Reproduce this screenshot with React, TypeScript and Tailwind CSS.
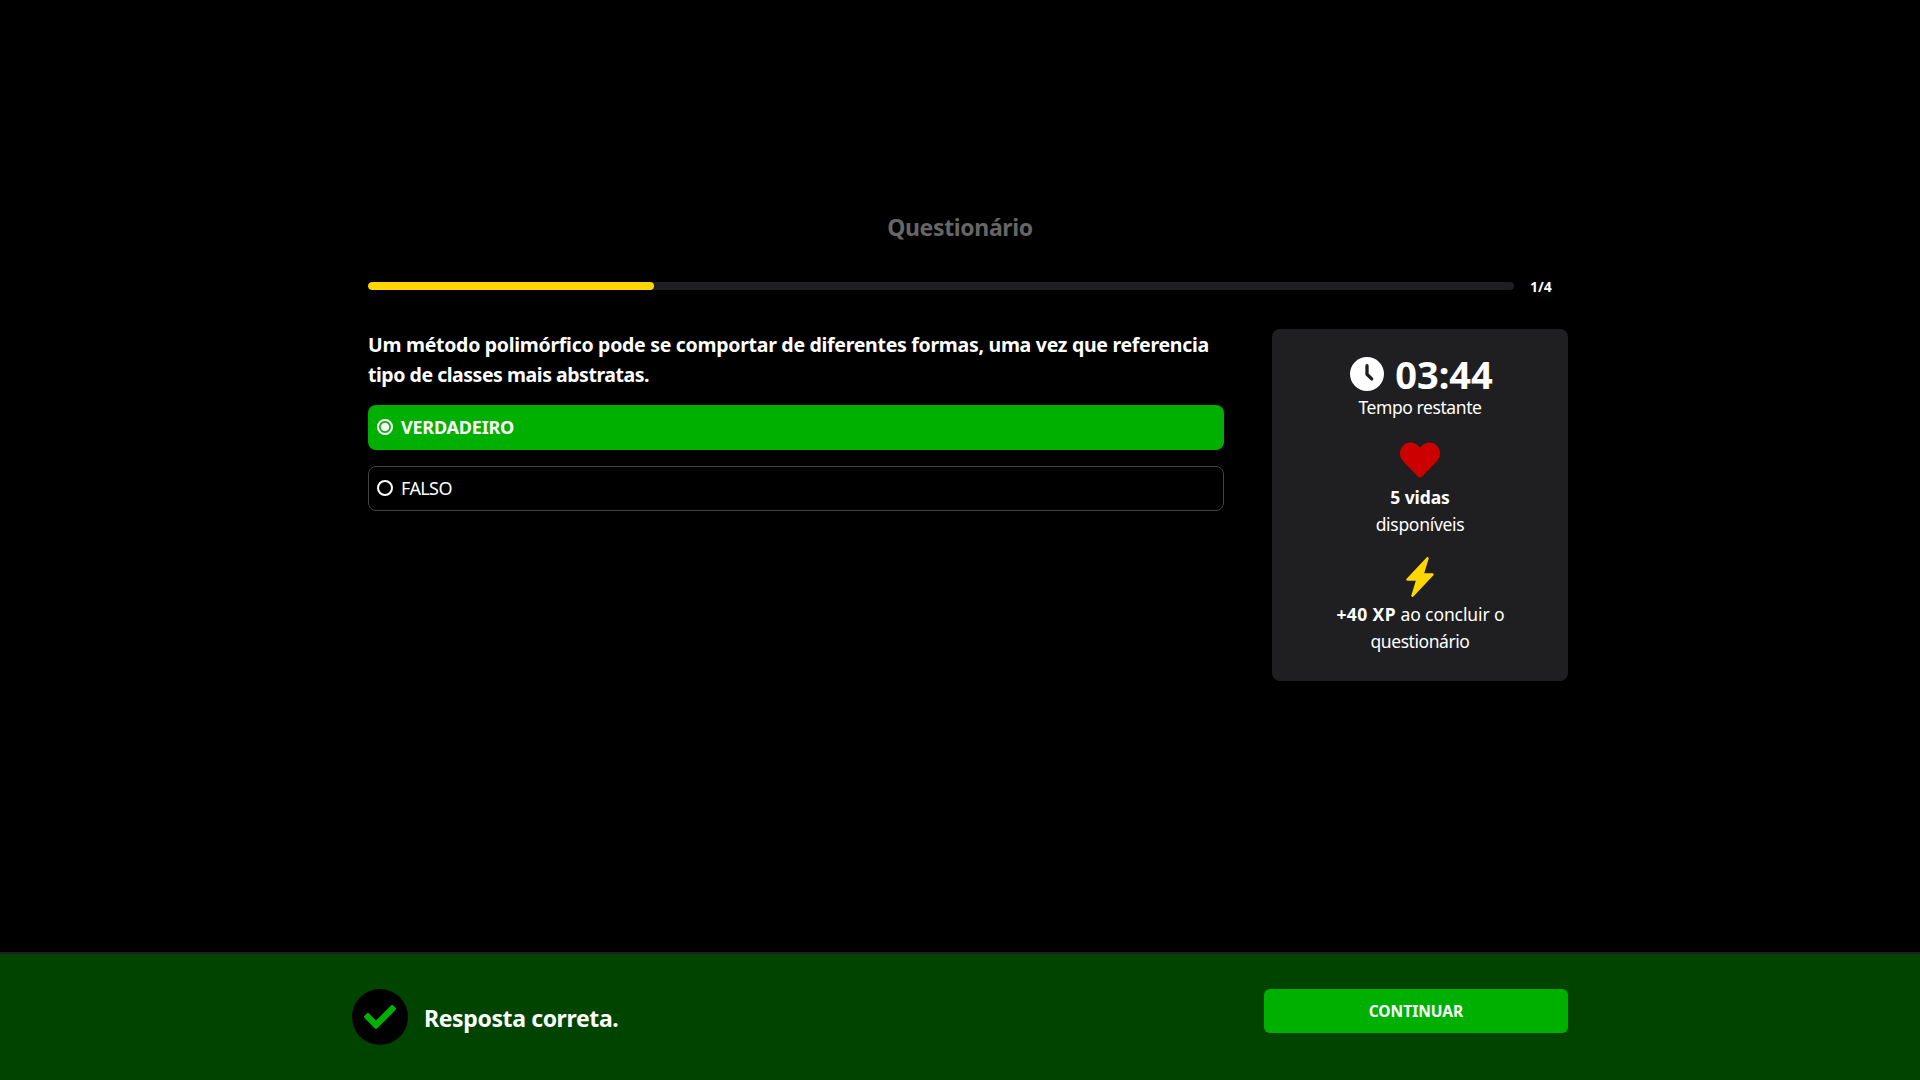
import { FaCheck, FaHeart } from "react-icons/fa";
import { BsLightningChargeFill } from "react-icons/bs";

function ClockIcon() {
  return (
    <svg viewBox="0 0 34 34" className="mt-[3px] h-[34px] w-[34px] shrink-0" fill="none">
      <circle cx="17" cy="17" r="17" fill="#fff" />
      <path d="M17 8.7V17.3L21.7 21.9" stroke="#1f1f22" strokeWidth="3.3" strokeLinecap="round" strokeLinejoin="round" />
    </svg>
  );
}

function Radio({ checked }: { checked?: boolean }) {
  return (
    <svg viewBox="0 0 16 16" className="h-4 w-4 shrink-0" fill="none">
      <circle cx="8" cy="8" r="7" stroke="#fff" strokeWidth="2" />
      {checked && <circle cx="8" cy="8" r="4.3" fill="#fff" />}
    </svg>
  );
}

export default function App() {
  return (
    <div className="flex h-screen flex-col overflow-hidden bg-black font-['Noto_Sans',sans-serif] text-white">
      <main className="mx-auto flex w-[1216px] grow flex-col pt-[209px] pl-4">
        <h1 className="-ml-4 text-center text-[23px] leading-9 font-bold tracking-[-0.36px] text-[#666]">
          Questionário
        </h1>

        <div className="mt-[31px] flex h-5 items-center gap-4">
          <div className="h-2 w-[1146px] overflow-hidden rounded-full bg-[#1f1f22]">
            <div className="h-full w-[286px] rounded-full bg-[#ffd700]" />
          </div>
          <span className="pt-px text-[14px] leading-5 font-bold">1/4</span>
        </div>

        <div className="mt-[33px] flex items-start gap-12">
          <section className="w-[856px] shrink-0">
            <p className="pt-px text-[19.5px] leading-[30px] font-bold whitespace-nowrap">
              <span className="block tracking-[-0.29px]">
                Um método polimórfico pode se comportar de diferentes formas, uma vez que referencia
              </span>
              <span className="block tracking-[-0.47px]">tipo de classes mais abstratas.</span>
            </p>
            <div className="mt-[15px] flex h-[45px] items-center gap-2 rounded-lg bg-[#00b000] px-[9px] pb-px">
              <Radio checked />
              <span className="text-[18px] leading-7 font-bold tracking-[-0.21px]">VERDADEIRO</span>
            </div>
            <div className="mt-4 flex h-[45px] items-center gap-2 rounded-lg border border-[#444] px-2 pb-px">
              <Radio />
              <span className="text-[18px] leading-7 tracking-[-0.6px]">FALSO</span>
            </div>
          </section>

          <aside className="h-[352px] w-[296px] shrink-0 rounded-lg bg-[#1f1f22] pt-[25px] text-center text-[17.5px] leading-[27px]">
            <div className="flex h-10 items-start justify-center gap-[11px] pl-[3px]">
              <ClockIcon />
              <span className="text-[38px] leading-10 font-bold">03:44</span>
            </div>
            <p className="tracking-[-0.42px]">Tempo restante</p>
            <FaHeart className="mx-auto mt-[19px] h-10 w-10 text-[#cc0000]" />
            <p className="mt-1 font-bold tracking-[-0.1px]">5 vidas</p>
            <p className="tracking-[-0.3px]">disponíveis</p>
            <BsLightningChargeFill className="mx-auto mt-[19px] h-10 w-10 text-[#ffd700]" />
            <p className="mt-1 pl-px tracking-[-0.1px]">
              <b className="font-bold tracking-[0.4px]">+40 XP</b> ao concluir o
            </p>
            <p className="tracking-[-0.44px]">questionário</p>
          </aside>
        </div>
      </main>

      <footer className="h-32 shrink-0 border-t-2 border-[#1f1f22] bg-[#004400]">
        <div className="mx-auto flex w-[1216px] items-start justify-between pt-[35px]">
          <div className="flex items-center gap-4">
            <div className="flex h-14 w-14 items-center justify-center rounded-full bg-black">
              <FaCheck className="h-8 w-8 text-[#00b000]" />
            </div>
            <span className="pt-px text-[23px] leading-8 font-bold tracking-[-0.38px]">Resposta correta.</span>
          </div>
          <button className="h-11 w-[304px] rounded-md bg-[#00b000] text-[15.5px] leading-6 font-bold">
            CONTINUAR
          </button>
        </div>
      </footer>
    </div>
  );
}
